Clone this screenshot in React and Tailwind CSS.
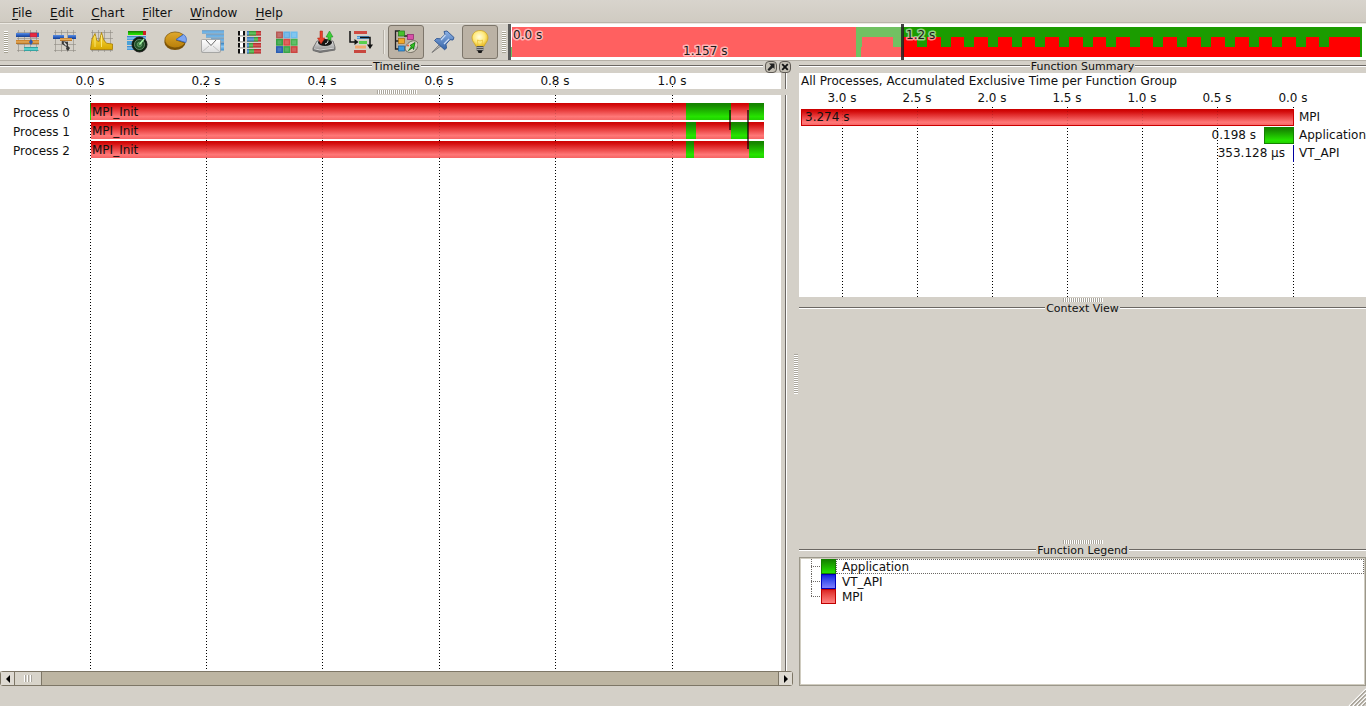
import React from "react";

const INK = "#111111";

/* ---------- toolbar icons ---------- */

function Svg({ children }) {
  return (
    <svg viewBox="0 0 24 24" className="block size-6" aria-hidden="true">
      {children}
    </svg>
  );
}

function Defs() {
  const vertical = (id, stops) => (
    <linearGradient id={id} x1="0" y1="0" x2="0" y2="1">
      {stops.map(([o, c]) => (
        <stop key={o} offset={o} stopColor={c} />
      ))}
    </linearGradient>
  );
  return (
    <svg width="0" height="0" className="absolute" aria-hidden="true">
      <defs>
        {vertical("red", [["0", "#cc0000"], ["0.15", "#d50f0f"], ["0.8", "#ff7878"], ["1", "#f56464"]])}
        {vertical("green", [["0", "#148200"], ["0.15", "#178a00"], ["0.8", "#26e400"], ["1", "#20d000"]])}
        {vertical("blueBar", [["0", "#5a8de0"], ["0.5", "#2f63c4"], ["1", "#163f8e"]])}
        {vertical("orangeBar", [["0", "#c77a22"], ["0.5", "#e6ad5c"], ["1", "#a8651a"]])}
        {vertical("cyanBar", [["0", "#1d8c8c"], ["0.5", "#6fe6e0"], ["1", "#1f9090"]])}
        {vertical("skyBar", [["0", "#2b78bb"], ["0.5", "#8cc8f2"], ["1", "#3d8ccc"]])}
        {vertical("gold", [["0", "#ffe24a"], ["1", "#d8a800"]])}
        {vertical("pie", [["0", "#e0a92c"], ["1", "#b87e0a"]])}
        {vertical("paper", [["0", "#ffffff"], ["1", "#dcdcdc"]])}
        {vertical("metal", [["0", "#e2e2e2"], ["1", "#808080"]])}
        {vertical("pin", [["0", "#8db2e6"], ["1", "#3564a8"]])}
        {vertical("gloss", [["0", "#000000"], ["0.5", "#ffffff"], ["1", "#000000"]])}
        <radialGradient id="bulb" cx="0.45" cy="0.4" r="0.6">
          <stop offset="0" stopColor="#fffde0" />
          <stop offset="0.6" stopColor="#ffe97a" />
          <stop offset="1" stopColor="#e8b820" />
        </radialGradient>
        <radialGradient id="radar" cx="0.5" cy="0.5" r="0.5">
          <stop offset="0" stopColor="#3f8f4a" />
          <stop offset="0.7" stopColor="#123a18" />
          <stop offset="1" stopColor="#050d06" />
        </radialGradient>
      </defs>
    </svg>
  );
}

const Lattice = () => (
  <path
    d="M2.500 0v22M8.500 0v22M14.500 0v22M20.500 0v22M1 2.500h22M1 8.500h22M1 14.500h22M1 20.500h22"
    stroke="#8d8982"
    strokeWidth="0.6"
    fill="none"
  />
);

const TimelineIcon = () => (
  <Svg>
    <Lattice />
    <rect x="0" y="3" width="14" height="4" fill="url(#blueBar)" />
    <rect x="14" y="3" width="7" height="4" fill="#e8283c" stroke="#8c1c60" strokeWidth="0.5" />
    <rect x="21" y="3" width="2" height="4" fill="#2f63c4" />
    <rect x="0" y="10" width="23" height="4" fill="url(#orangeBar)" />
    <path d="M15 9l2 3-2 3-2-3z" fill="#2858b8" />
    <rect x="8" y="17" width="14" height="4" fill="url(#cyanBar)" />
  </Svg>
);

const ProcessIcon = () => (
  <Svg>
    <Lattice />
    <rect x="0" y="5" width="11" height="4" fill="url(#blueBar)" />
    <rect x="15" y="5" width="8" height="4" fill="url(#blueBar)" />
    <rect x="7" y="8" width="12" height="3" fill="url(#orangeBar)" />
    <path d="M9 11l6 1v4l2 2-2 3-2-2 .5-2L9 14z" fill="#3a3a3a" />
    <path d="M11 12.500l2.500 3" stroke="#dddddd" strokeWidth="1.300" />
  </Svg>
);

const CounterIcon = () => (
  <Svg>
    <Lattice />
    <path
      d="M.5 19.500L2 9l3-5.500L6.800 10.600 9.200 11.600 11.500 2.500 13.600 9.800 16.500 13.300 22.500 14v5.500z"
      fill="url(#gold)"
      stroke="#a87c00"
      strokeWidth="0.8"
      strokeLinejoin="round"
    />
    <path d="M5 6v11M11.500 5v12" stroke="#fff08a" strokeWidth="0.8" />
  </Svg>
);

const RadarIcon = () => (
  <Svg>
    <rect x="1" y="1" width="17" height="4" fill="url(#green)" />
    <rect x="16" y="1" width="3" height="4" fill="#cc2222" />
    <rect x="0" y="6" width="19" height="4" fill="url(#skyBar)" />
    <rect x="0" y="11" width="9" height="4" fill="#4aa2d8" />
    <rect x="0" y="16" width="9" height="4" fill="url(#skyBar)" />
    <circle cx="12.500" cy="14.500" r="7.500" fill="url(#radar)" stroke="#222222" />
    <circle cx="12.500" cy="14.500" r="5" fill="none" stroke="#9db09d" strokeWidth="0.6" />
    <circle cx="12.500" cy="14.500" r="2.200" fill="none" stroke="#8fae8f" strokeWidth="0.6" />
    <path d="M12.500 14.500L17 9" stroke="#a8f7a8" strokeWidth="1.500" />
  </Svg>
);

const PieIcon = () => (
  <Svg>
    <ellipse cx="11" cy="12.500" rx="10.500" ry="7.500" fill="#7c5206" />
    <path d="M12 10L19 4.500A10.500 8 0 1 0 21 13z" fill="url(#pie)" stroke="#765006" strokeWidth="0.7" />
    <path d="M12 9.500l7.500-5c3 2 3.500 5 2.300 8z" fill="#7fa6f0" stroke="#3867c0" strokeWidth="0.8" />
  </Svg>
);

const MailIcon = () => (
  <Svg>
    <rect x="1" y="0.500" width="22" height="3" fill="url(#skyBar)" />
    <rect x="5" y="4.500" width="18" height="3" fill="url(#skyBar)" />
    <rect x="10" y="8.500" width="13" height="3" fill="url(#skyBar)" />
    <rect x="19" y="12.500" width="4" height="8" fill="url(#skyBar)" />
    <rect x="0.500" y="9.500" width="19" height="13" rx="1" fill="url(#paper)" stroke="#909090" strokeWidth="0.7" />
    <path d="M1 22l7-6M19 22l-7-6" stroke="#b5b5b5" strokeWidth="0.8" />
    <path d="M5 10l5 5.500L15 10" fill="#fbfbfb" stroke="#5a5a5a" strokeWidth="0.9" />
  </Svg>
);

const COMPARE = [
  [1, 3, 18],
  [7, 13, 20],
  [13, 5, 15],
  [19, 6, 16],
];
const CompareIcon = () => (
  <Svg>
    {COMPARE.map(([y, blue, green]) => (
      <g key={y}>
        <rect x="0" y={y} width="7" height="4.500" fill="#111111" />
        <rect x="2" y={y} width="3" height="4.500" fill="#ffffff" />
        <rect x="9" y={y} width="14" height="4.500" fill="#d43030" />
        <rect x="9" y={y} width={green - 9} height="4.500" fill="#3cb83c" />
        <rect x="9" y={y} width={Math.max(blue - 6, 2)} height="4.500" fill="#3f8cd8" />
        <rect x="9" y={y} width="14" height="4.500" fill="url(#gloss)" fillOpacity="0.22" />
      </g>
    ))}
  </Svg>
);

const MATRIX = [
  ["#b85a56", "#63b0e4", "#6cbcee"],
  ["#35a343", "#d94a44", "#46b450"],
  ["#2a5eb4", "#3aa648", "#cc4440"],
];
const MatrixIcon = () => (
  <Svg>
    {MATRIX.map((row, r) =>
      row.map((c, i) => (
        <g key={`${r}${i}`}>
          <rect x={1 + i * 7.3} y={1.5 + r * 7.3} width="7" height="6.900" fill={c} />
          <rect x={2.5 + i * 7.3} y={3 + r * 7.3} width="4" height="4" fill="#ffffff" fillOpacity="0.15" />
        </g>
      ))
    )}
  </Svg>
);

const DiskIcon = () => (
  <Svg>
    <path d="M5 11h16l2 6v3l-15 2.500-7-2v-2.500z" fill="url(#metal)" stroke="#555555" strokeWidth="0.7" />
    <path d="M1 18l7 1.500 15-2v2.500l-15 2.500-7-2z" fill="#767676" />
    <path d="M2 18.700l6 1.300 14-1.900" stroke="#eeeeee" fill="none" strokeWidth="0.8" />
    <ellipse cx="13" cy="12.500" rx="7" ry="3.500" fill="#151515" />
    <path d="M8 1h2.500v7H13l-4 6-3.500-6H8z" fill="#e8422c" stroke="#a82010" strokeWidth="0.5" />
    <path d="M17.500 1L21 7h-2v3h-3V7h-2z" fill="#3bcf36" stroke="#168018" strokeWidth="0.5" />
    <path d="M16 10.500c0 2-1 3-3 3.500" stroke="#eeeeee" fill="none" />
  </Svg>
);

const FlowIcon = () => (
  <Svg>
    <rect x="5" y="1" width="13" height="3" fill="#cf4a42" />
    <rect x="8" y="6" width="12" height="3" fill="url(#skyBar)" />
    <rect x="10" y="11" width="8" height="3" fill="#58cf4c" />
    <rect x="6" y="15.500" width="11" height="3" fill="#f2a970" />
    <rect x="5" y="20" width="12" height="3" fill="#c8473f" />
    <path d="M1 1v11h5" stroke="#111111" strokeWidth="1.500" fill="none" />
    <path d="M5.500 9l4 3-4 3z" fill="#111111" />
    <path d="M11 7.500h10V15" stroke="#111111" strokeWidth="1.500" fill="none" />
    <path d="M18 14.500h6L21 19z" fill="#111111" />
  </Svg>
);

const TreeIcon = () => (
  <Svg>
    <path d="M6 1H1.500v18H6M1.500 11H6M10 6h4" stroke="#222222" strokeWidth="1.300" fill="none" />
    <rect x="4.500" y="1" width="6" height="5" fill="#45c22c" stroke="#23761a" strokeWidth="0.7" />
    <rect x="13.500" y="4.500" width="6" height="5" fill="#d850a8" stroke="#8c246c" strokeWidth="0.7" />
    <rect x="4.500" y="8.500" width="6" height="5" fill="#f0a828" stroke="#a86a10" strokeWidth="0.7" />
    <rect x="4.500" y="16" width="6" height="5" fill="#3a98e0" stroke="#1c5c98" strokeWidth="0.7" />
    <path
      d="M12 21c-2-3 0-6 3-8.500 4-3 9-2 9 2 .3 4-3.500 8-7.500 8-2 0-2.500-.5-4.500-1.500z"
      fill="#d8d3c4"
      stroke="#5c574b"
      strokeWidth="0.8"
    />
    <path d="M21 12.500l-5 3 1.500 1-3 4 4.500-3 .5 2z" fill="#2fc51f" stroke="#0b6e0b" strokeWidth="0.8" />
    <circle cx="14" cy="15.500" r="1" fill="#e85a32" />
    <circle cx="21.500" cy="18" r="1" fill="#eeeeee" stroke="#555555" strokeWidth="0.4" />
  </Svg>
);

const PinIcon = () => (
  <Svg>
    <path d="M1 22.500l8-8.500 1.500 1.500z" fill="#c5c5c5" stroke="#666666" strokeWidth="0.8" />
    <path
      d="M13 1.500l3-.5 7 6.500-1 2.500-3-.3-4 4.500.5 4-2 1.500L3.500 10.500l2-2 4 .3L14 4.500z"
      fill="url(#pin)"
      stroke="#2b5290"
      strokeWidth="0.9"
    />
    <path d="M14.500 5L10 10M18 9l-5 5" stroke="#c9dcf6" strokeWidth="1.200" />
  </Svg>
);

const BulbIcon = () => (
  <Svg>
    <path
      d="M12 0.500c5 0 8 3.500 8 7.500 0 3.500-3 5.500-4 8.500H8C7 13.500 4 11.500 4 8 4 4 7 .5 12 .5z"
      fill="url(#bulb)"
      stroke="#c9a430"
      strokeWidth="0.8"
    />
    <path d="M10 16l-.5-6 2.500 1 2.500-1L14 16" fill="none" stroke="#e8c038" strokeWidth="0.8" />
    <rect x="8.500" y="16" width="7" height="5" rx="1" fill="#555555" />
    <path d="M8.500 17.500h7M8.500 19.500h7" stroke="#bbbbbb" strokeWidth="0.8" />
    <path d="M9.500 20.500h5l-1 2.500h-3z" fill="#161616" />
  </Svg>
);

const CHART_TOOLS = [
  ["Master Timeline", TimelineIcon],
  ["Process Timeline", ProcessIcon],
  ["Counter Data Timeline", CounterIcon],
  ["Performance Radar", RadarIcon],
  ["Function Summary", PieIcon],
  ["Message Summary", MailIcon],
  ["Process Summary", CompareIcon],
  ["Communication Matrix View", MatrixIcon],
  ["I/O Summary", DiskIcon],
  ["Call Tree", FlowIcon],
];
const VIEW_TOOLS = [
  ["Function Legend", TreeIcon, true],
  ["Marker View", PinIcon, false],
  ["Context View", BulbIcon, true],
];

function ToolButton({ label, icon: Icon, pressed }) {
  return (
    <button
      type="button"
      aria-label={label}
      aria-pressed={pressed}
      className={
        "flex h-[34px] w-9 items-center justify-center rounded-[3px] border " +
        (pressed ? "border-[#7d766b] bg-[#bbb2a5]" : "border-transparent")
      }
    >
      <Icon />
    </button>
  );
}

const ToolGrip = () => (
  <span className="h-[22px] w-1 bg-[repeating-linear-gradient(180deg,#ffffff_0_1px,#a5a192_1px_2px)]" />
);

/* ---------- overview strip in the toolbar ---------- */

const NOTCHES = [
  409, 433, 456, 480, 504, 527, 551, 575, 598, 622, 645, 669, 693, 717, 741, 764, 788, 811,
];

function Overview() {
  const halo = {
    fill: "#1a1a1a",
    stroke: "#ffffff",
    strokeOpacity: 0.55,
    strokeWidth: 3,
    strokeLinejoin: "round",
    paintOrder: "stroke",
  };
  return (
    <svg className="block h-9 min-w-0 flex-1 bg-white text-xs" role="img" aria-label="Zoom range">
      <g shapeRendering="crispEdges">
        <rect x="4" y="3" width="391" height="30" fill="#ff6060" />
        <path d="M348 3h47v20h-10V13h-31v10h-1v10h-5z" fill="#71c162" />
        <rect x="3" y="23" width="1" height="10" fill="#71c162" />
        <rect x="395" y="3" width="459" height="30" fill="#ff0000" />
        <rect x="395" y="3" width="459" height="10" fill="#1b9c00" />
        {NOTCHES.map((x) => (
          <rect key={x} x={x} y="13" width="10" height="10" fill="#1b9c00" />
        ))}
        <rect x="852" y="3" width="2" height="30" fill="#1b9c00" />
        <rect x="0" y="0" width="3" height="36" fill="#5a5a5a" />
        <rect x="393" y="0" width="3" height="36" fill="#202020" fillOpacity="0.85" />
      </g>
      <text x="5" y="15" {...halo}>0.0 s</text>
      <text x="175" y="31" {...halo}>1.157 s</text>
      <text x="398" y="15" {...halo}>1.2 s</text>
    </svg>
  );
}

/* ---------- shared panel parts ---------- */

const Rule = () => <span className="h-0.5 flex-1 border-t border-b border-t-[#6b6763] border-b-white" />;

function Title({ children, actions }) {
  return (
    <div className="flex h-3 shrink-0 items-center pb-0.5">
      <Rule />
      <h2 className="px-px pt-0.5 text-[11px] leading-3">{children}</h2>
      <div className="flex flex-1 items-center gap-0.5">
        <Rule />
        {actions}
      </div>
    </div>
  );
}

const HandleH = () => (
  <div className="flex h-1.5 shrink-0 items-center justify-center">
    <span className="h-1 w-10 bg-[repeating-linear-gradient(90deg,#aaa69d_0_1px,#ffffff_1px_2px)]" />
  </div>
);

const Edge = () => (
  <span className="mr-1.5 ml-1 w-0.5 border-r border-l border-r-white border-l-[#6b6763]" />
);

function DotLine({ x, y1, y2, opacity = 1 }) {
  return (
    <line
      x1={x + 0.5}
      x2={x + 0.5}
      y1={y1}
      y2={y2}
      stroke="#000000"
      strokeOpacity={opacity}
      strokeDasharray="1 2"
      shapeRendering="crispEdges"
    />
  );
}

/* ---------- timeline ---------- */

const TIMES = [
  [90, "0.0 s"],
  [206, "0.2 s"],
  [322, "0.4 s"],
  [439, "0.6 s"],
  [555, "0.8 s"],
  [672, "1.0 s"],
];

const PROCESSES = [
  { name: "Process 0", spans: [[90, 91, "green"], [91, 686, "red"], [686, 731, "green"], [731, 749, "red"], [749, 764, "green"]] },
  { name: "Process 1", spans: [[91, 686, "red"], [686, 696, "green"], [696, 731, "red"], [731, 748, "green"], [748, 764, "red"]] },
  { name: "Process 2", spans: [[91, 686, "red"], [686, 694, "green"], [694, 749, "red"], [749, 764, "green"]] },
];

const FILLS = { red: "url(#red)", green: "url(#green)" };

function Timeline() {
  return (
    <section className="flex min-w-0 flex-[793] flex-col">
      <Title
        actions={
          <div className="mr-0.5 flex gap-0.5 pt-0.5">
            <button type="button" aria-label="Undock" className="block">
              <svg viewBox="0 0 12 12" className="block size-3">
                <rect x="0.500" y="0.500" width="11" height="11" rx="3.500" fill="#c4bfb4" stroke="#5f5a54" />
                <path d="M4 2.500h5.500V8L8 6.500 4 10 2.500 8.500 6 4.500z" fill="#222222" />
              </svg>
            </button>
            <button type="button" aria-label="Close" className="block">
              <svg viewBox="0 0 12 12" className="block size-3">
                <rect x="0.500" y="0.500" width="11" height="11" rx="3.500" fill="#c4bfb4" stroke="#5f5a54" />
                <path d="M3.200 3.200l5.600 5.600M8.800 3.200l-5.600 5.600" stroke="#111111" strokeWidth="1.800" />
              </svg>
            </button>
          </div>
        }
      >
        Timeline
      </Title>
      <div className="flex h-4 shrink-0">
        <svg className="block h-4 min-w-0 flex-1 bg-white text-xs" fill={INK}>
          {TIMES.map(([x, t]) => (
            <g key={x}>
              <text x={x} y="12" textAnchor="middle">{t}</text>
              <DotLine x={x} y1="13" y2="14" />
            </g>
          ))}
        </svg>
        <Edge />
      </div>
      <HandleH />
      <div className="flex min-h-0 flex-1">
        <svg className="block h-full min-w-0 flex-1 bg-white text-xs" fill={INK} role="img" aria-label="Process timeline">
          {TIMES.map(([x]) => (
            <DotLine key={x} x={x} y1="0" y2="100%" />
          ))}
          {PROCESSES.map((p, i) => (
            <g key={p.name}>
              <text x="13" y={22 + i * 19}>{p.name}</text>
              {p.spans.map(([a, b, c]) => (
                <rect key={a} x={a} y={8 + i * 19} width={b - a} height="17" fill={FILLS[c]} shapeRendering="crispEdges" />
              ))}
              {TIMES.slice(1).map(([x]) => (
                <DotLine key={x} x={x} y1={9 + i * 19} y2={25 + i * 19} opacity={0.15} />
              ))}
              <text x="92" y={21 + i * 19}>MPI_Init</text>
            </g>
          ))}
          <path d="M730 15v20M748 15v39" stroke="#000000" strokeOpacity="0.6" strokeWidth="2" />
        </svg>
        <Edge />
      </div>
      <div className="flex h-[15px] shrink-0 rounded-[3px] border border-[#7d7666] bg-[#bdb5a2]">
        <button type="button" aria-label="Scroll left" className="flex w-[14px] items-center justify-center border-r border-[#7d7666] bg-[#dedad2]">
          <svg viewBox="0 0 4 8" className="h-2 w-1"><path d="M4 0v8L0 4z" fill="#000000" /></svg>
        </button>
        <div className="flex w-[27px] items-center justify-center border-r border-[#7d7666] bg-[#d8d4ca]">
          <span className="h-[7px] w-2 bg-[repeating-linear-gradient(90deg,#ffffff_0_1px,#aaa69d_1px_2px,#d8d4ca_2px_3px)]" />
        </div>
        <div className="flex-1" />
        <button type="button" aria-label="Scroll right" className="flex w-[14px] items-center justify-center border-l border-[#7d7666] bg-[#dedad2]">
          <svg viewBox="0 0 4 8" className="h-2 w-1"><path d="M0 0v8l4-4z" fill="#000000" /></svg>
        </button>
      </div>
    </section>
  );
}

/* ---------- function summary ---------- */

const SUMS = [
  [43, "3.0 s"],
  [118, "2.5 s"],
  [193, "2.0 s"],
  [268, "1.5 s"],
  [343, "1.0 s"],
  [418, "0.5 s"],
  [494, "0.0 s"],
];

function Summary() {
  return (
    <section className="flex min-h-0 flex-[236] flex-col">
      <Title>Function Summary</Title>
      <svg className="block min-h-0 w-full flex-1 bg-white text-xs" fill={INK} role="img" aria-label="Function summary">
        <text x="2" y="12">All Processes, Accumulated Exclusive Time per Function Group</text>
        {SUMS.map(([x, t]) => (
          <g key={x}>
            <text x={x} y="29" textAnchor="middle">{t}</text>
            <DotLine x={x} y1="34" y2="100%" />
          </g>
        ))}
        <g shapeRendering="crispEdges">
          <rect x="2.500" y="36.500" width="492" height="16" fill="url(#red)" stroke="#cc0000" />
          {SUMS.slice(0, 6).map(([x]) => (
            <DotLine key={x} x={x} y1="38" y2="52" opacity={0.15} />
          ))}
          <rect x="465.500" y="54.500" width="29" height="16" fill="url(#green)" stroke="#148200" />
          <rect x="494" y="72" width="1" height="17" fill="#0000a0" />
        </g>
        <text x="6" y="48">3.274 s</text>
        <text x="457" y="66" textAnchor="end">0.198 s</text>
        <text x="486" y="84" textAnchor="end">353.128 µs</text>
        <text x="500" y="48">MPI</text>
        <text x="500" y="66">Application</text>
        <text x="500" y="84">VT_API</text>
      </svg>
    </section>
  );
}

/* ---------- legend ---------- */

const GROUPS = [
  ["Application", "border-[#148200] bg-linear-to-b from-[#148200] to-[#26e400]"],
  ["VT_API", "border-[#0000b8] bg-linear-to-b from-[#1414e0] to-[#8080ff]"],
  ["MPI", "border-[#c00000] bg-linear-to-b from-[#dc2020] to-[#ff8080]"],
];

function Branch({ last }) {
  return (
    <svg viewBox="0 0 20 15" className="block h-[15px] w-5" shapeRendering="crispEdges" aria-hidden="true">
      <path
        d={last ? "M10.500 0v8M10 7.500h10" : "M10.500 0v15M10 7.500h10"}
        stroke="#6b6763"
        strokeDasharray="1 1"
        fill="none"
      />
    </svg>
  );
}

function Legend() {
  return (
    <section className="flex min-h-0 flex-[141] flex-col">
      <Title>Function Legend</Title>
      <ul className="min-h-0 flex-1 border border-[#9b978a] bg-white pt-px pr-px pl-px inset-ring inset-ring-[#d0ccc0]">
        {GROUPS.map(([name, swatch], i) => (
          <li key={name} className="flex h-[15px] items-center">
            <Branch last={i === GROUPS.length - 1} />
            <span className={"size-[15px] border " + swatch} />
            <span
              className={
                "h-[15px] flex-1 border pl-[5px] text-xs leading-[15px] " +
                (i === 0 ? "border-dotted border-[#6b6763]" : "border-transparent")
              }
            >
              {name}
            </span>
          </li>
        ))}
      </ul>
    </section>
  );
}

/* ---------- page ---------- */

const MENUS = ["File", "Edit", "Chart", "Filter", "Window", "Help"];

export default function App() {
  return (
    <div className="flex h-screen flex-col overflow-hidden bg-[#d4d0c8] font-['DejaVu_Sans',sans-serif] text-xs text-[#111111]">
      <Defs />
      <nav className="flex h-[23px] shrink-0 items-center border-b border-[#bab5ab] bg-linear-to-b from-[#d8d4cd] to-[#d0cbc2] pl-[3px]">
        {MENUS.map((m) => (
          <button key={m} type="button" className="px-[9px] pt-[3px] leading-4">
            <span className="underline underline-offset-2">{m[0]}</span>
            {m.slice(1)}
          </button>
        ))}
      </nav>
      <div role="toolbar" className="flex h-[38px] shrink-0 items-center gap-px border-t border-b border-t-[#ece9e3] border-b-[#b5b0a7] pl-1">
        <ToolGrip />
        <span className="w-0" />
        {CHART_TOOLS.map(([label, icon]) => (
          <ToolButton key={label} label={label} icon={icon} />
        ))}
        <span className="mr-0.5 ml-[3px] h-6 w-0.5 border-r border-l border-r-[#ece9e3] border-l-[#b5b0a7]" />
        {VIEW_TOOLS.map(([label, icon, on]) => (
          <ToolButton key={label} label={label} icon={icon} pressed={on} />
        ))}
        <span className="mr-px ml-[3px] flex">
          <ToolGrip />
        </span>
        <Overview />
      </div>
      <main className="flex min-h-0 flex-1">
        <Timeline />
        <div className="flex w-1.5 shrink-0 items-center justify-center">
          <span className="h-10 w-1 bg-[repeating-linear-gradient(180deg,#aaa69d_0_1px,#ffffff_1px_2px)]" />
        </div>
        <div className="flex min-w-0 flex-[567] flex-col">
          <Summary />
          <HandleH />
          <section className="min-h-0 flex-[236]">
            <Title>Context View</Title>
          </section>
          <HandleH />
          <Legend />
        </div>
      </main>
      <footer className="flex h-5 shrink-0 items-end justify-end">
        <svg viewBox="0 0 18 18" className="block size-[18px]" aria-hidden="true">
          <path d="M1 18L18 1M5 18L18 5M9 18L18 9M13 18l5-5" stroke="#ffffff" strokeWidth="1.200" />
          <path d="M2.500 18L18 2.500M6.500 18L18 6.500M10.500 18l7.500-7.500M14.500 18l3.500-3.500" stroke="#a09b90" strokeWidth="1.200" />
        </svg>
      </footer>
    </div>
  );
}
